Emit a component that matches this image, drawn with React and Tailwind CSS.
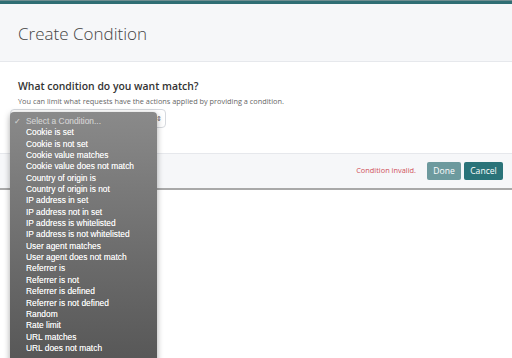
import React from 'react'

const options = [
  'Cookie is set',
  'Cookie is not set',
  'Cookie value matches',
  'Cookie value does not match',
  'Country of origin is',
  'Country of origin is not',
  'IP address in set',
  'IP address not in set',
  'IP address is whitelisted',
  'IP address is not whitelisted',
  'User agent matches',
  'User agent does not match',
  'Referrer is',
  'Referrer is not',
  'Referrer is defined',
  'Referrer is not defined',
  'Random',
  'Rate limit',
  'URL matches',
  'URL does not match',
]

export default function App() {
  return (
    <div className="relative w-[512px] h-[358px] overflow-hidden bg-white font-['Open_Sans',sans-serif]">
      {/* top strip */}
      <div className="h-[1px] bg-[#6f8e91]" />
      <div className="h-[3px] bg-[#2f6e74]" />

      {/* header */}
      <div className="h-[58px] bg-[#f6f7f9] border-b border-[#e6e8ec] pl-[18px] pt-[18px]">
        <h1 className="text-[17px] leading-[24px] font-light text-[#444]">Create Condition</h1>
      </div>

      {/* body */}
      <div className="h-[91px] pl-[18px] pt-[17px]">
        <h2 className="text-[10.4px] leading-[14px] font-semibold text-[#333]">What condition do you want match?</h2>
        <p className="mt-[2px] text-[7.35px] leading-[12px] text-[#666]">
          You can limit what requests have the actions applied by providing a condition.
        </p>
        <div className="mt-[2px] -ml-[8px] w-[156px] h-[19px] rounded-[4px] border border-[#d6d9de] bg-white flex items-center justify-end pr-[3px]">
          <span className="text-[7px] leading-none text-[#555]">⇕</span>
        </div>
      </div>

      {/* footer */}
      <div className="h-[37px] bg-[#f6f7f9] border-t border-[#e6e8ec] border-b-2 border-b-[#a9a9a9] flex items-center justify-end pr-[9px]">
        <span className="text-[7.4px] text-[#d0505a] mr-[11px]">Condition invalid.</span>
        <button className="w-[34px] h-[18px] rounded-[2px] bg-[#6d9a9e] text-white text-[8.6px] mr-[3px]">Done</button>
        <button className="w-[39px] h-[18px] rounded-[2px] bg-[#2a7379] text-white text-[8.6px]">Cancel</button>
      </div>

      {/* native select menu */}
      <div className="absolute left-[10px] top-[112px] w-[147px] h-[260px] rounded-[4px] bg-gradient-to-b from-[#8a8a8a] to-[#555555] shadow-[0_2px_6px_rgba(0,0,0,0.35)] pt-[4px] font-['Liberation_Sans',Arial,sans-serif] [text-shadow:0_0_0.4px_rgba(255,255,255,0.6)]">
        <div className="relative h-[11.35px] leading-[11.35px] pl-[16px] text-[8.4px] text-[#c4c4c4]">
          <span className="absolute left-[4px] top-0">✓</span>
          Select a Condition...
        </div>
        {options.map((o) => (
          <div key={o} className="h-[11.35px] leading-[11.35px] pl-[16px] text-[8.4px] text-white">
            {o}
          </div>
        ))}
      </div>
    </div>
  )
}
